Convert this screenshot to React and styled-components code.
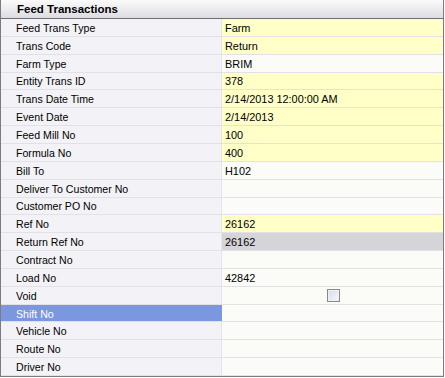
import styled, { createGlobalStyle } from "styled-components";

// property grid for one feed transaction

const rows = [
  { label: "Feed Trans Type", value: "Farm", tone: "yellow" },
  { label: "Trans Code", value: "Return", tone: "yellow" },
  { label: "Farm Type", value: "BRIM" },
  { label: "Entity Trans ID", value: "378", tone: "yellow" },
  { label: "Trans Date Time", value: "2/14/2013 12:00:00 AM", tone: "yellow" },
  { label: "Event Date", value: "2/14/2013", tone: "yellow" },
  { label: "Feed Mill No", value: "100", tone: "yellow" },
  { label: "Formula No", value: "400", tone: "yellow" },
  { label: "Bill To", value: "H102" },
  { label: "Deliver To Customer No", value: "" },
  { label: "Customer PO No", value: "" },
  { label: "Ref No", value: "26162", tone: "yellow" },
  { label: "Return Ref No", value: "26162", tone: "gray" },
  { label: "Contract No", value: "" },
  { label: "Load No", value: "42842" },
  { label: "Void", check: true },
  { label: "Shift No", value: "", selected: true },
  { label: "Vehicle No", value: "" },
  { label: "Route No", value: "" },
  { label: "Driver No", value: "" },
];

const tones = {
  yellow: "#ffffc7",
  gray: "#d5d4d8",
  white: "#fbfcf8",
};

const App = () => {
  return (
    <>
      <Global />
      <Panel>
        <Header>Feed Transactions</Header>
        <Grid>
          {rows.map((r) => (
            <Row key={r.label}>
              <Label $selected={r.selected}>{r.label}</Label>
              <Value $tone={r.tone} $selected={r.selected} $center={r.check}>
                {r.check ? <CheckBox /> : r.value}
              </Value>
            </Row>
          ))}
        </Grid>
      </Panel>
    </>
  );
};

const Global = createGlobalStyle`
  body {
    margin: 0;
    background: #ffffff;
    font-family: "Liberation Sans", Arial, sans-serif;
  }
`;

const Panel = styled.div`
  width: 444px;
  height: 377px;
  box-sizing: border-box;
  display: flex;
  flex-direction: column;
  border: 1px solid #7c7c80;
  border-top: none;
  background: #f3f2f6;
`;

const Header = styled.div`
  height: 19px;
  box-sizing: border-box;
  flex-shrink: 0;
  display: flex;
  align-items: center;
  padding-left: 16px;
  font-size: 11.5px;
  font-weight: bold;
  color: #000;
  background: linear-gradient(#fafafb, #e9e9ec 60%, #dcdce1);
  border-bottom: 1px solid #6f6f75;
`;

const Grid = styled.div`
  flex: 1;
  display: grid;
  grid-template-rows: repeat(20, 1fr);
`;

const Row = styled.div`
  display: grid;
  grid-template-columns: 220px 1fr;
  border-bottom: 1px solid #e3e1e7;
  color: #000;
`;

const Label = styled.div`
  display: flex;
  align-items: center;
  padding: 1px 0 0 15px;
  font-size: 10.6px;
  background: ${(p) => (p.$selected ? "#7b97e0" : "#f3f2f6")};
  color: ${(p) => (p.$selected ? "#ffffff" : "#000000")};
`;

const Value = styled.div`
  display: flex;
  align-items: center;
  justify-content: ${(p) => (p.$center ? "center" : "flex-start")};
  padding: 1px 0 0 3px;
  font-size: 10.9px;
  border-left: 1px solid ${(p) => (p.$selected ? "#7b97e0" : "#e6e4ea")};
  background: ${(p) => tones[p.$tone || "white"]};
`;

const CheckBox = styled.span`
  width: 11px;
  height: 11px;
  margin: 0 0 0 -2px;
  border: 1px solid #8a8a8a;
  background: linear-gradient(135deg, #d9dce6, #f6f7fa);
  box-shadow: inset 0 0 0 1px #eef0f4;
`;

export default App;
